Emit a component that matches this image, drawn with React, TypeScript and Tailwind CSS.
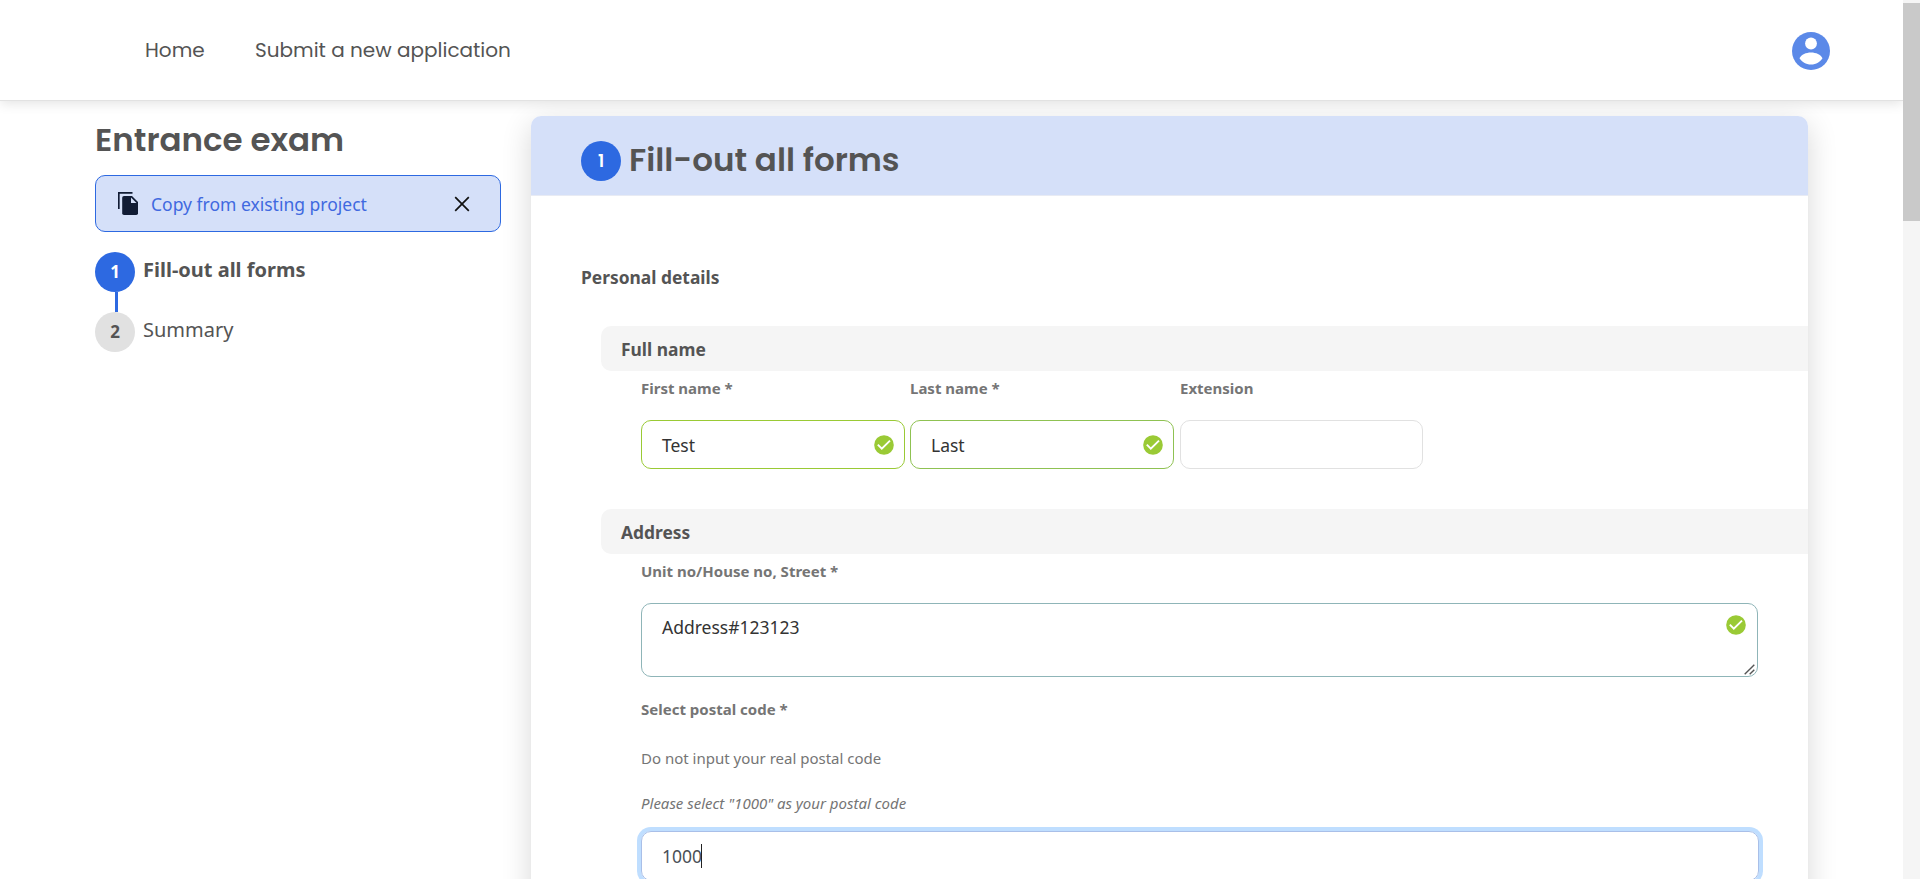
import React from "react";

function CheckIcon() {
  return (
    <svg className="size-[20px] shrink-0" viewBox="0 0 20 20" fill="none">
      <circle cx="10" cy="10" r="9.8" fill="#9aca35" />
      <path d="M3.800 9.700 7.800 13.700 16 5.600" stroke="#fff" strokeWidth="1.900" />
    </svg>
  );
}

function StepBadge({ n, active, heading }: { n: number; active?: boolean; heading?: boolean }) {
  return (
    <span
      className={`flex size-10 shrink-0 items-center justify-center rounded-full text-[17px] leading-6 font-bold ${
        active ? "bg-[#2d69e1] text-white" : "bg-[#e1e1e1] text-[#545454]"
      } ${heading ? "pb-px font-['Poppins',Inter,sans-serif] font-semibold" : ""}`}
    >
      {n}
    </span>
  );
}

function SectionBar({ title }: { title: string }) {
  return (
    <div className="ml-[70px] flex h-[45px] items-center rounded-l-[10px] bg-[#f5f5f5] pl-5 text-[17.4px] leading-6 font-bold">
      {title}
    </div>
  );
}

function Label({ children }: { children: React.ReactNode }) {
  return <div className="h-5 text-[15px] leading-5 font-bold text-[#757575]">{children}</div>;
}

function Field({ label, value, box }: { label: string; value?: string; box: string }) {
  return (
    <div>
      <Label>{label}</Label>
      <div className={`mt-[22px] flex h-[49px] items-center justify-between rounded-[10px] border pr-2.5 pl-5 text-[17.5px] leading-6 text-[#333] ${box}`}>
        <span>{value}</span>
        {value && <CheckIcon />}
      </div>
    </div>
  );
}

export default function App() {
  return (
    <div className="flex h-[879px] w-[1920px] overflow-hidden bg-white font-['Noto_Sans',sans-serif] text-[#545454]">
      <div className="flex h-full w-[1903px] flex-col overflow-hidden">
        <header className="z-10 flex h-[101px] shrink-0 items-center justify-between border-b border-[#e2e2e2] bg-white pr-[73px] pl-[145px] shadow-[0_2px_12px_rgba(0,0,0,0.12)]">
          <nav className="flex gap-[50px] font-['Poppins',Inter,sans-serif] text-[20px] leading-[30px]">
            <a className="w-[60px]">Home</a>
            <a>Submit a new application</a>
          </nav>
          <svg className="mt-px size-[38px]" viewBox="0 0 38 38">
            <circle cx="19" cy="19" r="19" fill="#5b89e8" />
            <circle cx="19" cy="11.5" r="5.9" fill="#fff" />
            <path d="M7.500 26.300C9.300 22.700 14 20.600 19 20.600s9.700 2.100 11.500 5.700C28.200 30 24.200 32.600 19 32.600S9.800 30 7.500 26.300Z" fill="#fff" />
          </svg>
        </header>

        <div className="flex pt-[15px] pl-[95px]">
          <aside className="w-[406px] shrink-0">
            <h1 className="h-12 font-['Poppins',Inter,sans-serif] text-[32.500px] leading-[48px] font-semibold">Entrance exam</h1>
            <div className="mt-[11px] flex h-[57px] items-center rounded-[10px] border border-[#2d69e1] bg-[#d5e0f9] pr-[30px] pl-[22px]">
              <svg className="h-[23px] w-5" viewBox="0 0 20 23" fill="none">
                <path d="M.8 17V.8H14.500" stroke="#111c35" strokeWidth="1.700" />
                <path d="M6 4h8l6 6v11.200A1.800 1.800 0 0 1 18.200 23H6a1.800 1.800 0 0 1-1.800-1.800V5.800A1.800 1.800 0 0 1 6 4Z" fill="#111c35" />
                <path d="M13 5.500V11h5.500Z" fill="#d5e0f9" />
              </svg>
              <span className="ml-[13px] grow text-[17.500px] leading-6 text-[#3f69e0]">Copy from existing project</span>
              <svg className="size-4" viewBox="0 0 16 16" stroke="#111" strokeWidth="1.700">
                <path d="m1.200 1.200 13.600 13.600M14.800 1.200 1.200 14.800" />
              </svg>
            </div>
            <div className="mt-5 flex gap-2">
              <StepBadge n={1} active />
              <span className="text-[20px] leading-9 font-bold">Fill-out all forms</span>
            </div>
            <div className="ml-5 h-5 w-[3px] bg-[#2d69e1]" />
            <div className="flex gap-2">
              <StepBadge n={2} />
              <span className="text-[20px] leading-9">Summary</span>
            </div>
          </aside>

          <main className="ml-[30px] h-[900px] w-[1277px] shrink-0 rounded-t-[10px] bg-white shadow-[0_8px_30px_rgba(0,0,0,0.16)]">
            <div className="flex h-20 rounded-t-[10px] border-b border-[#e8ebf4] bg-[#d5e0f9] pt-[25px] pl-[50px]">
              <StepBadge n={1} active heading />
              <h2 className="-mt-[5px] ml-2 font-['Poppins',Inter,sans-serif] text-[32.500px] leading-[48px] font-semibold">Fill-out all forms</h2>
            </div>
            <h3 className="mt-[69px] ml-[50px] h-6 text-[17.400px] leading-6 font-bold">Personal details</h3>
            <div className="mt-[37px]"><SectionBar title="Full name" /></div>
            <div className="mt-[7px] ml-[110px] flex">
              <Field label="First name *" value="Test" box="w-[264px] border-[#9aca35]" />
              <div className="ml-[5px]"><Field label="Last name *" value="Last" box="w-[264px] border-[#8fc252]" /></div>
              <div className="ml-[6px]"><Field label="Extension" box="w-[243px] border-[#e1e1e1]" /></div>
            </div>
            <div className="mt-10"><SectionBar title="Address" /></div>
            <div className="mt-[7px] ml-[110px]">
              <Label>Unit no/House no, Street *</Label>
              <div className="relative mt-[22px] flex h-[74px] w-[1117px] items-start justify-between rounded-[10px] border border-[#8fb5b8] pt-[11px] pr-[11px] pl-5 text-[17.500px] leading-6 text-[#333]">
                <span>Address#123123</span>
                <CheckIcon />
                <svg className="absolute right-0.5 bottom-px size-[11px]" viewBox="0 0 11 11" stroke="#555" strokeWidth="1.400">
                  <path d="M.7 10.300 10.300.7M5.700 10.300l4.600-4.600" />
                </svg>
              </div>
              <div className="mt-[22px]"><Label>Select postal code *</Label></div>
              <p className="mt-[29px] h-5 text-[15px] leading-5 text-[#757575]">Do not input your real postal code</p>
              <p className="mt-[25px] h-5 text-[15px] leading-5 text-[#757575] italic">Please select "1000" as your postal code</p>
              <div className="mt-[18px] flex h-[50px] w-[1118px] items-center rounded-[10px] border border-[#a9bfe8] pl-5 text-[17.500px] leading-6 text-[#495057] shadow-[0_0_0_4px_#bfdeff]">
                <span className="w-[39px]">1000</span>
                <span className="h-6 w-px bg-[#222]" />
              </div>
            </div>
          </main>
        </div>
      </div>
      <div className="h-full w-[17px] bg-[#f5f5f5] pt-[3px]">
        <div className="h-[218px] bg-[#c9c9c9]" />
      </div>
    </div>
  );
}
